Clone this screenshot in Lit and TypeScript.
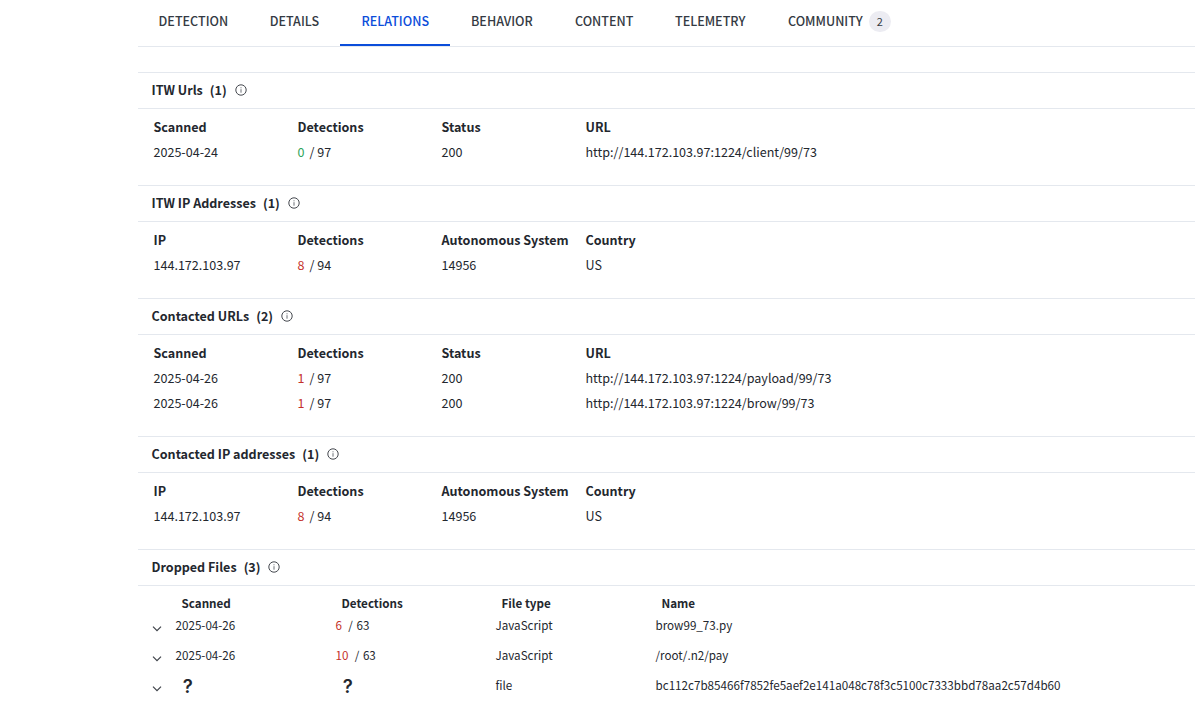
import { LitElement, html, css, svg } from "lit";
import { customElement, property } from "lit/decorators.js";
import { classMap } from "lit/directives/class-map.js";

type Score = { hits: string; total: string };
type Cell = string | Score;

interface Section {
  title: string;
  count: number;
  columns: string[];
  rows: Cell[][];
}

const score = (hits: string, total: string): Score => ({ hits, total });

const URL_COLUMNS = ["Scanned", "Detections", "Status", "URL"];
const IP_COLUMNS = ["IP", "Detections", "Autonomous System", "Country"];

const SECTIONS: Section[] = [
  {
    title: "ITW Urls",
    count: 1,
    columns: URL_COLUMNS,
    rows: [["2025-04-24", score("0", "97"), "200", "http://144.172.103.97:1224/client/99/73"]],
  },
  {
    title: "ITW IP Addresses",
    count: 1,
    columns: IP_COLUMNS,
    rows: [["144.172.103.97", score("8", "94"), "14956", "US"]],
  },
  {
    title: "Contacted URLs",
    count: 2,
    columns: URL_COLUMNS,
    rows: [
      ["2025-04-26", score("1", "97"), "200", "http://144.172.103.97:1224/payload/99/73"],
      ["2025-04-26", score("1", "97"), "200", "http://144.172.103.97:1224/brow/99/73"],
    ],
  },
  {
    title: "Contacted IP addresses",
    count: 1,
    columns: IP_COLUMNS,
    rows: [["144.172.103.97", score("8", "94"), "14956", "US"]],
  },
];

const FILES: Cell[][] = [
  ["2025-04-26", score("6", "63"), "JavaScript", "brow99_73.py"],
  ["2025-04-26", score("10", "63"), "JavaScript", "/root/.n2/pay"],
  ["?", "?", "file", "bc112c7b85466f7852fe5aef2e141a048c78f3c5100c7333bbd78aa2c57d4b60"],
];

const infoIcon = html`<svg class="info" viewBox="0 0 12 12" width="12" height="12">
  ${svg`<circle cx="6" cy="6" r="5.2" fill="none" stroke="#45494f" stroke-width="1" />
  <path d="M6 5.2V8.7M6 3.3V4.3" stroke="#6b6f75" stroke-width="1" fill="none" />`}
</svg>`;

const chevronIcon = html`<svg class="chevron" viewBox="0 0 10 6" width="10" height="6">
  ${svg`<path d="M1 0.6L5 4.6L9 0.6" fill="none" stroke="#3f434a" stroke-width="1.2" />`}
</svg>`;

const renderCell = (cell: Cell) => {
  if (typeof cell === "string") {
    return html`<span class=${classMap({ cell: true, unknown: cell === "?" })}>${cell}</span>`;
  }
  return html`<span class="cell"
    ><span class=${classMap({ hits: true, clean: cell.hits === "0" })}>${cell.hits}</span
    ><span class="total">/ ${cell.total}</span></span
  >`;
};

const tableStyles = css`
  :host {
    display: block;
  }
  .head {
    display: flex;
    align-items: center;
    box-sizing: border-box;
    height: 37px;
    padding: 0 0 2px 13.5px;
    border-top: 1px solid #e4e8ee;
    border-bottom: 1px solid #e4e8ee;
    font-weight: 700;
    line-height: 19px;
  }
  .count {
    margin-left: 7px;
  }
  .info {
    display: block;
    margin-left: 8px;
  }
  .row {
    display: grid;
    white-space: nowrap;
    align-items: center;
  }
  .labels {
    font-weight: 700;
  }
  .hits {
    color: #c5302a;
  }
  .hits.clean {
    color: #2fa45a;
  }
  .total {
    margin-left: 5px;
  }
`;

@customElement("relation-section")
export class RelationSection extends LitElement {
  static styles = [
    tableStyles,
    css`
      .body {
        padding: 5px 0 21px 15.5px;
      }
      .row {
        grid-template-columns: 144px 144px 144px 1fr;
        height: 25px;
        line-height: 25px;
      }
    `,
  ];

  @property({ attribute: false }) section!: Section;

  render() {
    const s = this.section;
    return html`
      <div class="head">
        <span>${s.title}</span><span class="count">(${s.count})</span>${infoIcon}
      </div>
      <div class="body">
        <div class="row labels">${s.columns.map((c) => html`<span>${c}</span>`)}</div>
        ${s.rows.map((r) => html`<div class="row">${r.map(renderCell)}</div>`)}
      </div>
    `;
  }
}

@customElement("dropped-files")
export class DroppedFiles extends LitElement {
  static styles = [
    tableStyles,
    css`
      .body {
        padding: 8px 0 0 14px;
        font-size: 11.65px;
      }
      .row {
        grid-template-columns: 23.5px 160px 160px 160px 1fr;
        height: 30px;
        line-height: 30px;
      }
      .row.labels {
        height: 16px;
        line-height: 18px;
        padding-left: 6px;
      }
      .info {
        margin-left: 7.5px;
      }
      .chevron {
        display: block;
        margin-top: 7px;
      }
      .total {
        margin-left: 6.4px;
        word-spacing: 0.9px;
      }
      .unknown {
        padding: 2px 0 0 7.3px;
        font-family: Inter, sans-serif;
        font-size: 18.5px;
        font-weight: 600;
        line-height: 28px;
      }
    `,
  ];

  render() {
    return html`
      <div class="head"><span>Dropped Files</span><span class="count">(3)</span>${infoIcon}</div>
      <div class="body">
        <div class="row labels">
          <span></span><span>Scanned</span><span>Detections</span><span>File type</span><span>Name</span>
        </div>
        ${FILES.map((r) => html`<div class="row">${chevronIcon}${r.map(renderCell)}</div>`)}
      </div>
    `;
  }
}

@customElement("app-root")
export class AppRoot extends LitElement {
  static styles = css`
    :host {
      display: block;
      box-sizing: border-box;
      height: 720px;
      padding-left: 138px;
      overflow: hidden;
      background: #fff;
      color: #23272e;
      font-family: "Noto Sans CJK SC", "Noto Sans", sans-serif;
      font-size: 12.55px;
    }
    .tabs {
      display: grid;
      grid-template-columns: 110.7px 91.3px 110px 104px 100px 113px 1fr;
      height: 46px;
      border-bottom: 1px solid #e4e8ee;
      margin-bottom: 25px;
      font-weight: 500;
      line-height: 20px;
      color: #343a43;
    }
    .tab {
      box-sizing: border-box;
      display: flex;
      align-items: center;
      padding: 0 0 2px 21px;
      border-bottom: 2px solid transparent;
      white-space: nowrap;
    }
    .tab:first-child {
      padding-left: 20.6px;
    }
    .active {
      padding-left: 21.5px;
      color: #0b4dda;
      border-bottom-color: #0b4dda;
    }
    .badge {
      width: 22px;
      height: 21px;
      margin-left: 6.3px;
      border-radius: 11px;
      background: #ececf2;
      color: #343a43;
      font-size: 11px;
      font-weight: 400;
      line-height: 21px;
      text-align: center;
    }
  `;

  render() {
    const tabs = ["DETECTION", "DETAILS", "RELATIONS", "BEHAVIOR", "CONTENT", "TELEMETRY", "COMMUNITY"];
    return html`
      <nav class="tabs">
        ${tabs.map(
          (t) => html`<span class=${classMap({ tab: true, active: t === "RELATIONS" })}
            ><span>${t}</span>${t === "COMMUNITY" ? html`<span class="badge">2</span>` : null}</span
          >`,
        )}
      </nav>
      <main>
        ${SECTIONS.map((s) => html`<relation-section .section=${s}></relation-section>`)}
        <dropped-files></dropped-files>
      </main>
    `;
  }
}
